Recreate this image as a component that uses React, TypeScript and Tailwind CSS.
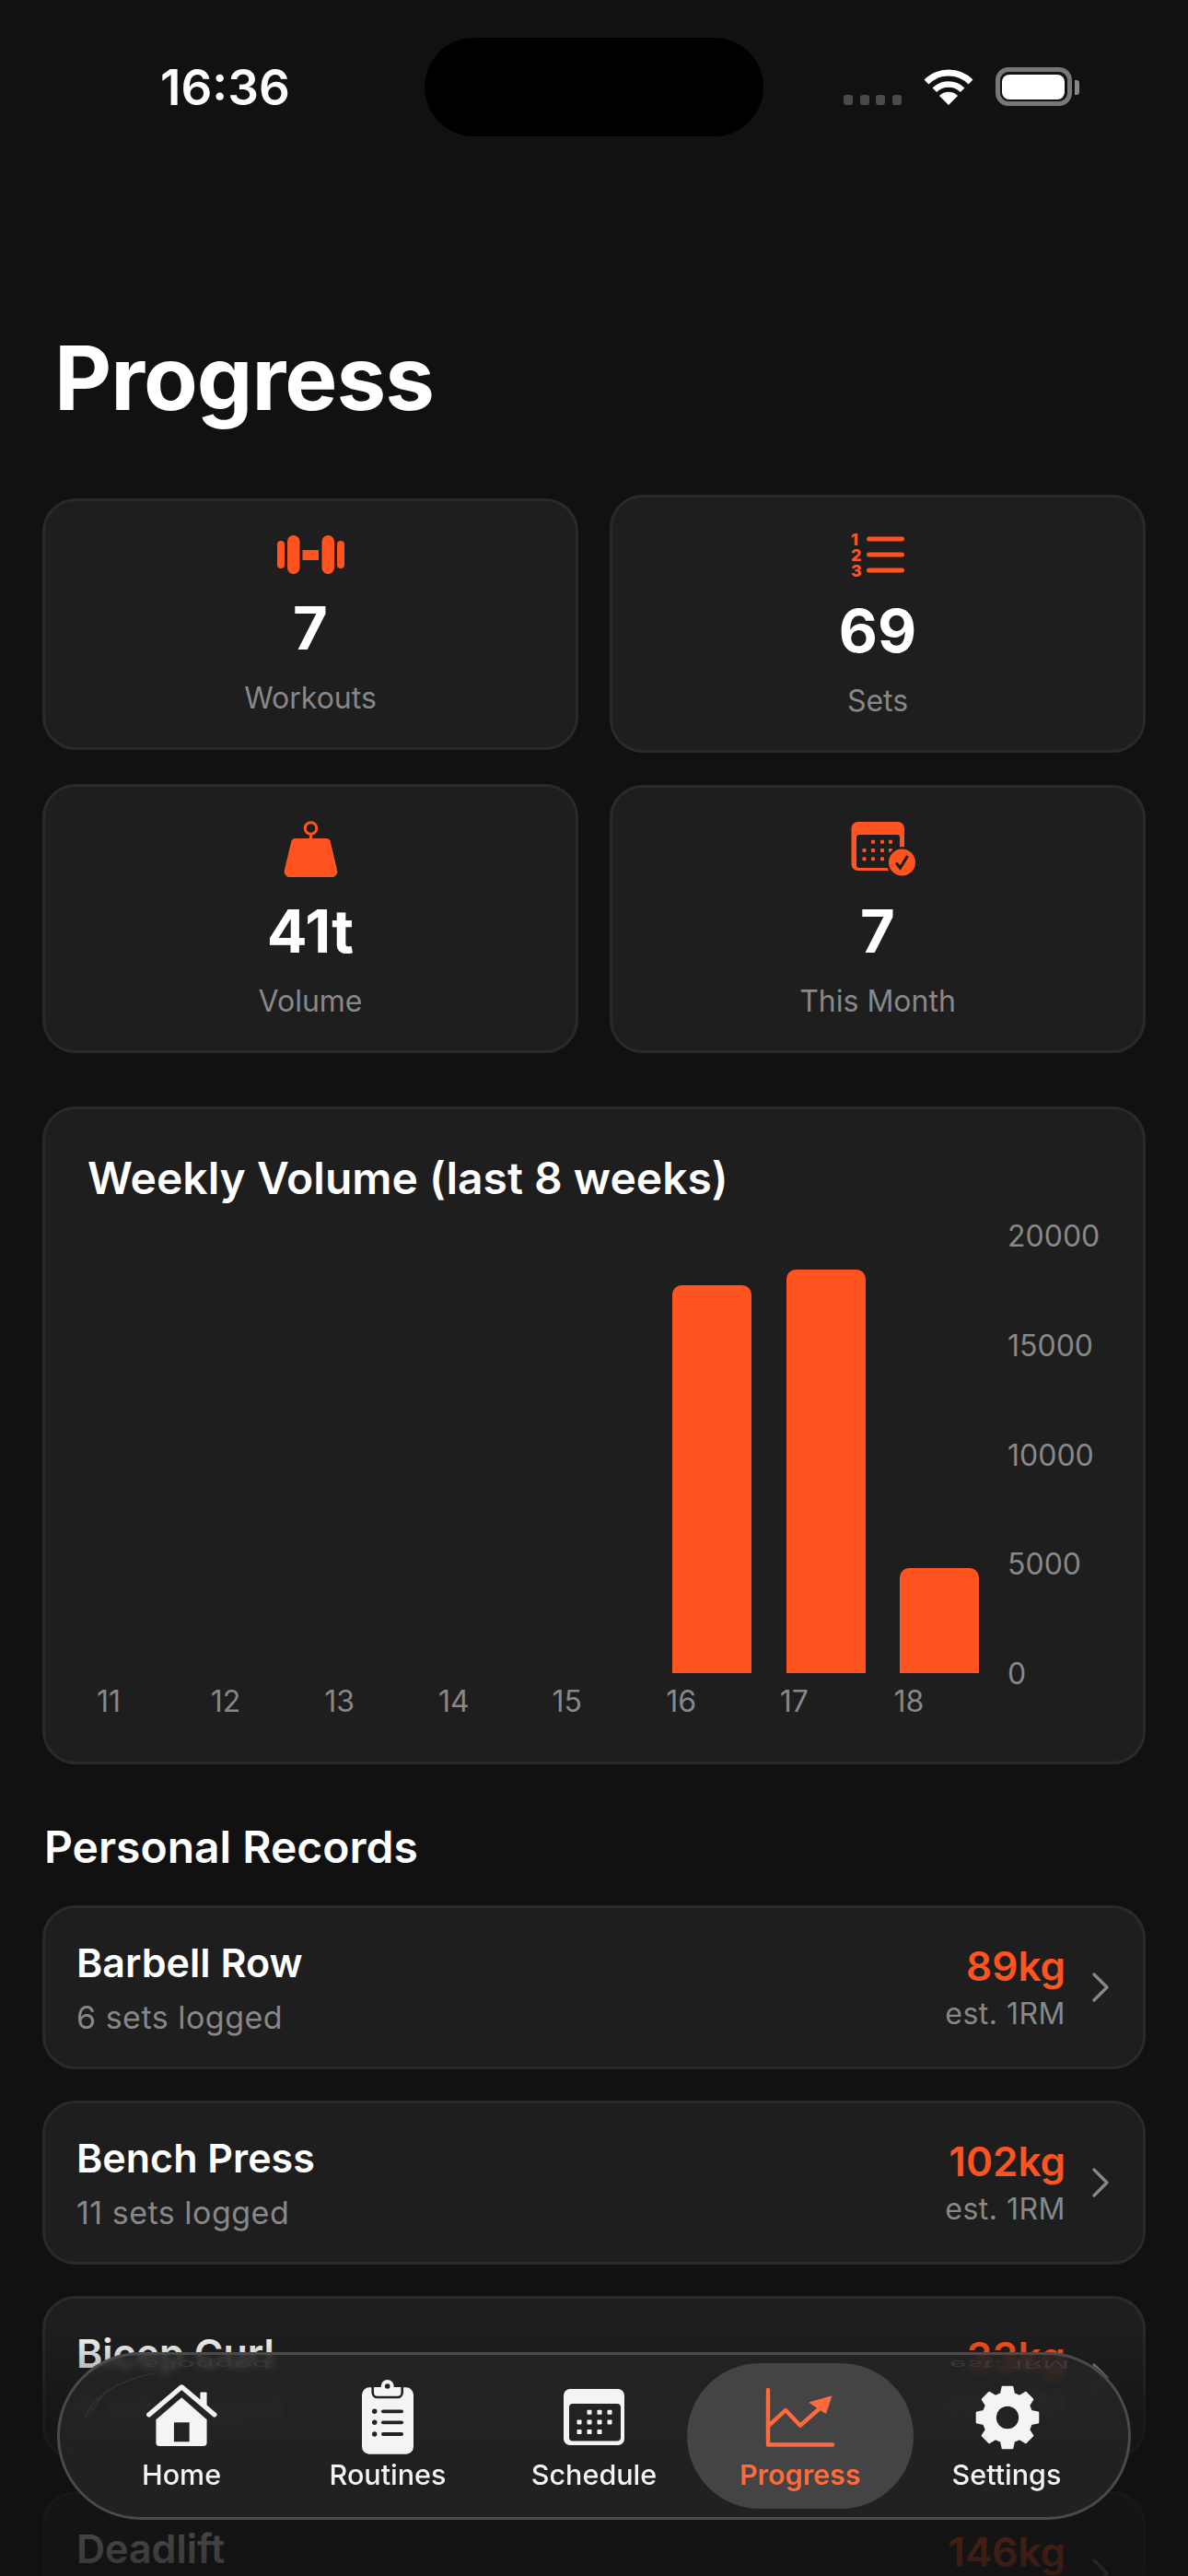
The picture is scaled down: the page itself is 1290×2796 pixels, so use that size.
import React from "react";

const ACCENT = "#ff5420";

// gear outline, 8 teeth around the centre of a 72 box
const gearPath = (() => {
  const pts: string[] = [];
  const at = (deg: number, r: number) => {
    const rad = ((deg - 90) * Math.PI) / 180;
    return `${(36 + r * Math.cos(rad)).toFixed(2)} ${(36 + r * Math.sin(rad)).toFixed(2)}`;
  };
  for (let i = 0; i < 8; i++) {
    const a = i * 45;
    pts.push(at(a - 15, 26.5), at(a - 9, 33.5), at(a + 9, 33.5), at(a + 15, 26.5));
  }
  const hole = "M36 24a12 12 0 1 0 0 24a12 12 0 1 0 0-24Z";
  return `M${pts.join("L")}Z${hole}`;
})();

const DumbbellIcon = () => (
  <svg width="73" height="42" viewBox="0 0 73 42" fill={ACCENT}>
    <rect x="0" y="6" width="8" height="30" rx="4" />
    <rect x="11" y="0" width="13.5" height="42" rx="6.7" />
    <rect x="27.5" y="16" width="17.5" height="11" />
    <rect x="48.5" y="0" width="13.5" height="42" rx="6.7" />
    <rect x="65" y="6" width="8" height="30" rx="4" />
  </svg>
);

const NumberedListIcon = () => (
  <svg width="58" height="49" viewBox="0 0 58 49" fill={ACCENT}>
    <rect x="17" y="5.5" width="41" height="5" rx="2.5" />
    <rect x="17" y="22.5" width="41" height="5" rx="2.5" />
    <rect x="17" y="39.5" width="41" height="5" rx="2.5" />
    <text x="0" y="14.5" fontSize="18" fontWeight="800" fontFamily="Inter, sans-serif">1</text>
    <text x="0" y="31.5" fontSize="18" fontWeight="800" fontFamily="Inter, sans-serif">2</text>
    <text x="0" y="48.5" fontSize="18" fontWeight="800" fontFamily="Inter, sans-serif">3</text>
  </svg>
);

const WeightIcon = () => (
  <svg width="59" height="61" viewBox="0 0 59 61" fill={ACCENT}>
    <circle cx="29.5" cy="8" r="6.3" fill="none" stroke={ACCENT} strokeWidth="3" />
    <rect x="28" y="14" width="3" height="6" />
    <path d="M13 19H46a5 5 0 0 1 5 4.5L58 53a6 6 0 0 1-6 8H7A6 6 0 0 1 1 53L8 23.5a5 5 0 0 1 5-4.5Z" />
  </svg>
);

const CalendarCheckIcon = () => (
  <svg className="ml-[13px]" width="71" height="60" viewBox="0 0 71 60">
    <rect x="0.5" y="0" width="57.5" height="53" rx="7" fill={ACCENT} />
    <rect x="6" y="14" width="47" height="36" rx="3" fill="#1e1e1e" />
    <g fill={ACCENT}>
      {[24, 34, 43].map((x) => <rect key={x} x={x - 2} y="19.7" width="4" height="4" rx="1" />)}
      {[14.5, 24, 34, 43].map((x) => <rect key={x} x={x - 2} y="29" width="4" height="4" rx="1" />)}
      {[14.5, 24, 34].map((x) => <rect key={x} x={x - 2} y="38.3" width="4" height="4" rx="1" />)}
    </g>
    <circle cx="55.5" cy="44" r="17" fill="#1e1e1e" />
    <circle cx="55.5" cy="44" r="14.5" fill={ACCENT} />
    <path d="M49 44.5l4.5 5.5L61.5 37" fill="none" stroke="#1e1e1e" strokeWidth="3.2" />
  </svg>
);

const HomeIcon = () => (
  <svg width="86" height="78" viewBox="0 0 86 84" fill="#f4f4f4">
    <path d="M13.3 44.3L43.3 18.7L72.7 44.3V71.3a4 4 0 0 1-4 4H17.3a4 4 0 0 1-4-4Z" />
    <rect x="34.3" y="47.7" width="18" height="22.6" fill="#222222" />
    <rect x="65" y="12.5" width="7.7" height="16" rx="1" />
    <path d="M5 38.7L43.3 6.3L81.7 38.7" fill="none" stroke="#f4f4f4" strokeWidth="5.6" strokeLinecap="round" strokeLinejoin="round" />
  </svg>
);

const ClipboardIcon = () => (
  <svg width="84" height="84" viewBox="0 0 84 84" fill="#f4f4f4">
    <rect x="14" y="9.3" width="56" height="72.4" rx="8" />
    <path d="M25.7 9V15a5 5 0 0 0 5 5H52.7a5 5 0 0 0 5-5V9" fill="#f4f4f4" stroke="#222222" strokeWidth="2.6" />
    <circle cx="41.7" cy="8" r="7" />
    <circle cx="41.7" cy="8" r="2.8" fill="#222222" />
    <g fill="#222222">
      <rect x="35" y="33.4" width="24" height="3.8" rx="1.9" />
      <rect x="35" y="45.4" width="24" height="3.8" rx="1.9" />
      <rect x="35" y="58.1" width="24" height="3.8" rx="1.9" />
      <circle cx="27.7" cy="35.3" r="2.7" />
      <circle cx="27.7" cy="47.3" r="2.7" />
      <circle cx="27.7" cy="60" r="2.7" />
    </g>
  </svg>
);

const ScheduleIcon = () => (
  <svg width="66" height="62" viewBox="0 0 66 62">
    <rect x="0" y="0" width="66" height="61" rx="7" fill="#f4f4f4" />
    <rect x="6" y="16" width="56" height="40.5" rx="4" fill="#222222" />
    <g fill="#f4f4f4">
      {[28, 39, 50].map((x) => <rect key={x} x={x - 2.5} y="22.7" width="5" height="5" rx="0.8" />)}
      {[17, 28, 39, 50].map((x) => <rect key={x} x={x - 2.5} y="33.4" width="5" height="5" rx="0.8" />)}
      {[17, 28, 39].map((x) => <rect key={x} x={x - 2.5} y="44.1" width="5" height="5" rx="0.8" />)}
    </g>
  </svg>
);

const ProgressIcon = () => (
  <svg width="80" height="66" viewBox="0 0 80 66" fill="none" stroke="#ff6b3d" strokeWidth="4.4" strokeLinecap="round" strokeLinejoin="round">
    <path d="M5 3V62.5H75" />
    <path d="M6 41.7L24 25L40 41.7L60 24" />
    <path d="M73.5 10L50 16.7L67.4 28.3Z" fill="#ff6b3d" strokeWidth="1" />
  </svg>
);

const GearIcon = () => (
  <svg className="ml-[1px]" width="72" height="72" viewBox="0 0 72 72">
    <path d={gearPath} fill="#f4f4f4" stroke="#f4f4f4" strokeWidth="2.4" strokeLinejoin="round" fillRule="evenodd" />
    <circle cx="36" cy="36" r="12.2" fill="#222222" />
  </svg>
);

const StatCard: React.FC<{ icon: React.ReactNode; value: string; label: string }> = ({ icon, value, label }) => (
  <div className="flex flex-col items-center rounded-[36px] border-[3px] border-[#2a2a2a] bg-[#1e1e1e] pt-[37px] pb-[33px]">
    {icon}
    <div className="mt-[19px] text-[65px] leading-[80px] font-bold text-white">{value}</div>
    <div className="mt-[16px] text-[32px] leading-[40px] text-[#888888]">{label}</div>
  </div>
);

const WEEKS = [
  { week: 11, volume: 0 },
  { week: 12, volume: 0 },
  { week: 13, volume: 0 },
  { week: 14, volume: 0 },
  { week: 15, volume: 0 },
  { week: 16, volume: 17726 },
  { week: 17, volume: 18442 },
  { week: 18, volume: 4800 },
];

const RECORDS = [
  { name: "Barbell Row", sets: "6 sets logged", weight: "89kg" },
  { name: "Bench Press", sets: "11 sets logged", weight: "102kg" },
  { name: "Bicep Curl", sets: "9 sets logged", weight: "33kg" },
  { name: "Deadlift", sets: "8 sets logged", weight: "146kg" },
];

const TABS = [
  { label: "Home", icon: <HomeIcon /> },
  { label: "Routines", icon: <ClipboardIcon /> },
  { label: "Schedule", icon: <ScheduleIcon /> },
  { label: "Progress", icon: <ProgressIcon />, active: true },
  { label: "Settings", icon: <GearIcon /> },
];

const RecordRow: React.FC<{ name: string; sets: string; weight: string }> = ({ name, sets, weight }) => (
  <div className="flex h-[178px] shrink-0 items-center rounded-[36px] border-[3px] border-[#2a2a2a] bg-[#1e1e1e] pr-[36px] pl-[34px]">
    <div className="flex flex-1 flex-col gap-[10px]">
      <div className="text-[43px] leading-[56px] font-semibold text-white">{name}</div>
      <div className="text-[34px] leading-[44px] tracking-[0.5px] text-[#888888]">{sets}</div>
    </div>
    <div className="flex flex-col items-end gap-[5px]">
      <div className="text-[44px] leading-[52px] font-semibold text-[#ff5420]">{weight}</div>
      <div className="text-[32px] leading-[42px] tracking-[0.5px] text-[#888888]">est. 1RM</div>
    </div>
    <svg className="ml-[28px]" width="20" height="32" viewBox="0 0 20 32" fill="none" stroke="#888888" strokeWidth="3.2" strokeLinecap="round" strokeLinejoin="round">
      <path d="M3 2L17 16L3 30" />
    </svg>
  </div>
);

export default function App() {
  return (
    <div className="relative h-[2796px] w-[1290px] overflow-hidden bg-[#111111] font-[Inter,sans-serif]">
      {/* status bar */}
      <div className="flex h-[352px] items-start pt-[41px]">
        <div className="w-[461px] pt-[28px] pl-[174px] text-[53px] leading-[52px] font-semibold text-white">16:36</div>
        <div className="h-[107px] w-[368px] rounded-full bg-black" />
        <div className="ml-[87px] flex items-end pt-[32px]">
          <div className="mr-[23px] flex gap-[7.5px] pb-[1px]">
            <div className="h-[11px] w-[10px] rounded-[3px] bg-[#4a4a4a]" />
            <div className="h-[11px] w-[10px] rounded-[3px] bg-[#4a4a4a]" />
            <div className="h-[11px] w-[10px] rounded-[3px] bg-[#4a4a4a]" />
            <div className="h-[11px] w-[10px] rounded-[3px] bg-[#4a4a4a]" />
          </div>
          <svg className="mr-[23px]" width="56" height="42" viewBox="0 0 56 42" fill="none" stroke="white">
            <path d="M4 16A34 34 0 0 1 52 16" strokeWidth="7" />
            <path d="M12.8 24.8A21.5 21.5 0 0 1 43.2 24.8" strokeWidth="6.5" />
            <path d="M28 41L18 31A14 14 0 0 1 38 31Z" fill="white" stroke="none" />
          </svg>
          <div className="flex h-[42px] w-[83px] items-center justify-center rounded-[14px] border-[5px] border-[#777777]">
            <div className="h-[27px] w-[68px] rounded-[8px] bg-white" />
          </div>
          <div className="mb-[12px] ml-[3px] h-[16px] w-[5px] rounded-r-[3px] bg-[#888888]" />
        </div>
      </div>

      <h1 className="pl-[59px] text-[96px] leading-[116px] font-bold tracking-[-1px] text-white">Progress</h1>

      <div className="mt-[69px] px-[46px]">
        <div className="grid grid-cols-2 items-center gap-[34px]">
          <StatCard icon={<DumbbellIcon />} value="7" label="Workouts" />
          <StatCard icon={<NumberedListIcon />} value="69" label="Sets" />
          <StatCard icon={<WeightIcon />} value="41t" label="Volume" />
          <StatCard icon={<CalendarCheckIcon />} value="7" label="This Month" />
        </div>

        {/* weekly volume chart */}
        <div className="mt-[58px] rounded-[36px] border-[3px] border-[#2a2a2a] bg-[#1e1e1e] pt-[45px] pb-[47px] pl-[46px]">
          <div className="text-[48px] leading-[60px] font-semibold text-white">Weekly Volume (last 8 weeks)</div>
          <div className="mt-[15px] ml-[10px] flex">
            <div className="w-[989px] pt-[17px]">
              <div className="grid h-[475px] grid-cols-8 items-end">
                {WEEKS.map((w) => (
                  <div key={w.week} className="ml-[7px] w-[86px] rounded-t-[10px] bg-[#ff5420]" style={{ height: (w.volume / 20000) * 475 }} />
                ))}
              </div>
              <div className="mt-[13px] grid grid-cols-8">
                {WEEKS.map((w) => (
                  <div key={w.week} className="text-[32px] leading-[36px] text-[#888888]">{w.week}</div>
                ))}
              </div>
            </div>
            <div className="flex h-[511px] flex-col justify-between text-[32px] leading-[36px] text-[#888888]">
              <div>20000</div>
              <div>15000</div>
              <div>10000</div>
              <div>5000</div>
              <div>0</div>
            </div>
          </div>
        </div>

        <div className="mt-[60px] pl-[2px] text-[48px] leading-[60px] font-semibold text-white">Personal Records</div>

        <div className="mt-[33px] flex flex-col gap-[34px]">
          {RECORDS.map((r) => (
            <RecordRow key={r.name} {...r} />
          ))}
        </div>
      </div>

      {/* list fades out under the tab bar */}
      <div className="absolute right-0 bottom-0 left-0 h-[270px] bg-gradient-to-b from-[#11111100] via-[#11111199] via-35% to-[#111111d8]" />

      {/* floating tab bar */}
      <div className="absolute bottom-[61px] left-[62px] h-[182px] w-[1166px] overflow-hidden rounded-full border-[3px] border-[#4a4a4a] bg-[#252525d0] backdrop-blur-[4px]">
        <div className="absolute top-[3px] left-[91px] origin-top -scale-y-[0.35] translate-y-[14px] text-[33px] leading-[40px] tracking-[0.5px] text-[#3a3a3a]">s logged</div>
        <div className="absolute top-[3px] left-[966px] origin-top -scale-y-[0.35] translate-y-[14px] text-[32px] leading-[40px] tracking-[0.5px] text-[#3a3a3a]">est. 1RM</div>
        <svg className="absolute top-[16px] left-[26px]" width="90" height="60" viewBox="0 0 90 60" fill="none" stroke="#323232" strokeWidth="1.5">
          <path d="M2 52C8 32 34 12 76 4" />
          <path d="M8 46C16 34 18 30 26 22" />
        </svg>
        <div className="relative flex pl-[20px]">
          {TABS.map((t) => (
            <div
              key={t.label}
              className={
                t.active
                  ? "-mx-[11px] mt-[9px] flex h-[158px] w-[246px] shrink-0 flex-col items-center rounded-full bg-[#444444] pt-[20px]"
                  : "mt-[9px] flex h-[158px] w-[224px] shrink-0 flex-col items-center pt-[20px]"
              }
            >
              <div className="flex h-[78px] items-center justify-center">{t.icon}</div>
              <div className={t.active ? "mt-[5px] text-[30.5px] leading-[36px] font-semibold text-[#ff6b3d]" : "mt-[5px] text-[30.5px] leading-[36px] font-medium text-[#f4f4f4]"}>
                {t.label}
              </div>
            </div>
          ))}
        </div>
      </div>
    </div>
  );
}
